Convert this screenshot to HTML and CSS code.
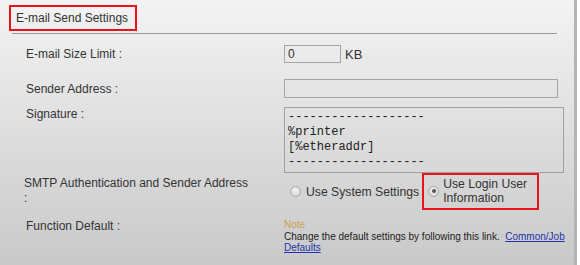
FILE: index.html
```html
<!DOCTYPE html>
<html lang="en">
<head>
  <meta charset="UTF-8" />
  <title>E-mail Send Settings</title>
  <link rel="stylesheet" href="styles.css">
</head>
<body>
  <div class="panel">
    <div class="title-wrap">
      <h2 class="title">E-mail Send Settings</h2>
    </div>
    <div class="rule"></div>

    <!-- Size limit -->
    <div class="row row-size">
      <div class="label">E-mail Size Limit :</div>
      <div class="field">
        <div class="box box-small">0</div>
        <span class="unit">KB</span>
      </div>
    </div>

    <!-- Sender -->
    <div class="row row-sender">
      <div class="label">Sender Address :</div>
      <div class="field">
        <div class="box box-wide"></div>
      </div>
    </div>

    <!-- Signature -->
    <div class="row row-sig">
      <div class="label">Signature :</div>
      <div class="field">
        <div class="sig">-------------------
%printer
[%etheraddr]
-------------------</div>
      </div>
    </div>

    <!-- SMTP -->
    <div class="row row-smtp">
      <div class="label label-smtp">SMTP Authentication and Sender Address<br>:</div>
      <div class="field radios">
        <div class="opt">
          <span class="radio"></span>
          <span>Use System Settings</span>
        </div>
        <div class="opt opt-marked">
          <span class="radio checked"></span>
          <span>Use Login User<br>Information</span>
        </div>
      </div>
    </div>

    <!-- Function default -->
    <div class="row row-func">
      <div class="label">Function Default :</div>
      <div class="field note">
        <div class="note-head">Note</div>
        <div>Change the default settings by following this link. &nbsp;<a href="#">Common/Job Defaults</a></div>
      </div>
    </div>
  </div>
</body>
</html>
```

FILE: styles.css
```css
body {
  margin: 0;
  font-family: "Liberation Sans", Arial, sans-serif;
  color: #333;
}
.panel {
  width: 577px;
  height: 265px;
  box-sizing: border-box;
  border-right: 3px solid #b4b4b4;
  background: linear-gradient(#f3f3f3, #c9c9c9);
  overflow: hidden;
}
.title-wrap {
  padding: 5px 0 0 9px;
  height: 26px;
}
.title {
  display: inline-block;
  margin: 0;
  font-size: 12px;
  font-weight: normal;
  color: #333;
  border: 2px solid #e8141c;
  padding: 3px 7px 3px 5px;
  line-height: 16px;
}
.rule {
  margin: 2px 0 0 12px;
  width: 545px;
  height: 1px;
  background: #9a9a9a;
}
.row {
  display: flex;
  font-size: 12px;
}
.label {
  width: 284px;
  padding-left: 26px;
  box-sizing: border-box;
  flex-shrink: 0;
}
.field {
  display: flex;
  align-items: center;
}
.row-size {
  margin-top: 11px;
  height: 18px;
  align-items: center;
}
.box {
  border: 1px solid #a5a5a5;
  height: 18px;
  box-sizing: border-box;
  padding: 2px 4px 2px 3px;
  line-height: 13px;
}
.box-small {
  width: 57px;
}
.box-wide {
  width: 274px;
}
.unit {
  margin-left: 4px;
  font-size: 13px;
}
.row-sender {
  margin-top: 16px;
  height: 19px;
  align-items: center;
}
.row-sender .box {
  height: 19px;
}
.row-sig {
  margin-top: 9px;
}
.sig {
  width: 280px;
  height: 66px;
  box-sizing: border-box;
  border: 1px solid #a0a0a0;
  padding: 2px 3px;
  font-family: "Liberation Mono", "Courier New", monospace;
  font-size: 12px;
  line-height: 15px;
  white-space: pre;
  color: #222;
  overflow: hidden;
}
.row-smtp {
  margin-top: 0;
  height: 37px;
  align-items: flex-start;
}
.label-smtp {
  padding-left: 24px;
  padding-top: 3px;
  line-height: 15px;
}
.radios {
  align-items: center;
  height: 37px;
  font-size: 12.2px;
}
.opt {
  display: flex;
  align-items: center;
  padding-left: 6px;
}
.opt-marked {
  margin-left: 3px;
  width: 117px;
  height: 37px;
  box-sizing: border-box;
  border: 2px solid #e8141c;
  padding-left: 4px;
  padding-bottom: 1px;
  line-height: 14px;
}
.radio {
  width: 11px;
  height: 11px;
  box-sizing: border-box;
  border-radius: 50%;
  border: 1px solid #a8a8a8;
  background: radial-gradient(circle at 50% 35%, #f4f4f4, #cfcfcf);
  margin-right: 5px;
  position: relative;
  flex-shrink: 0;
}
.opt-marked .radio {
  margin-right: 4px;
}
.radio.checked::after {
  content: "";
  position: absolute;
  left: 2.5px;
  top: 2.5px;
  width: 4px;
  height: 4px;
  border-radius: 50%;
  background: #555;
}
.row-func {
  margin-top: 9px;
}
.note {
  display: block;
  font-size: 10px;
  line-height: 11.5px;
  width: 290px;
  color: #222;
}
.note-head {
  color: #c9a24a;
}
.note a {
  color: #2233aa;
}
```
